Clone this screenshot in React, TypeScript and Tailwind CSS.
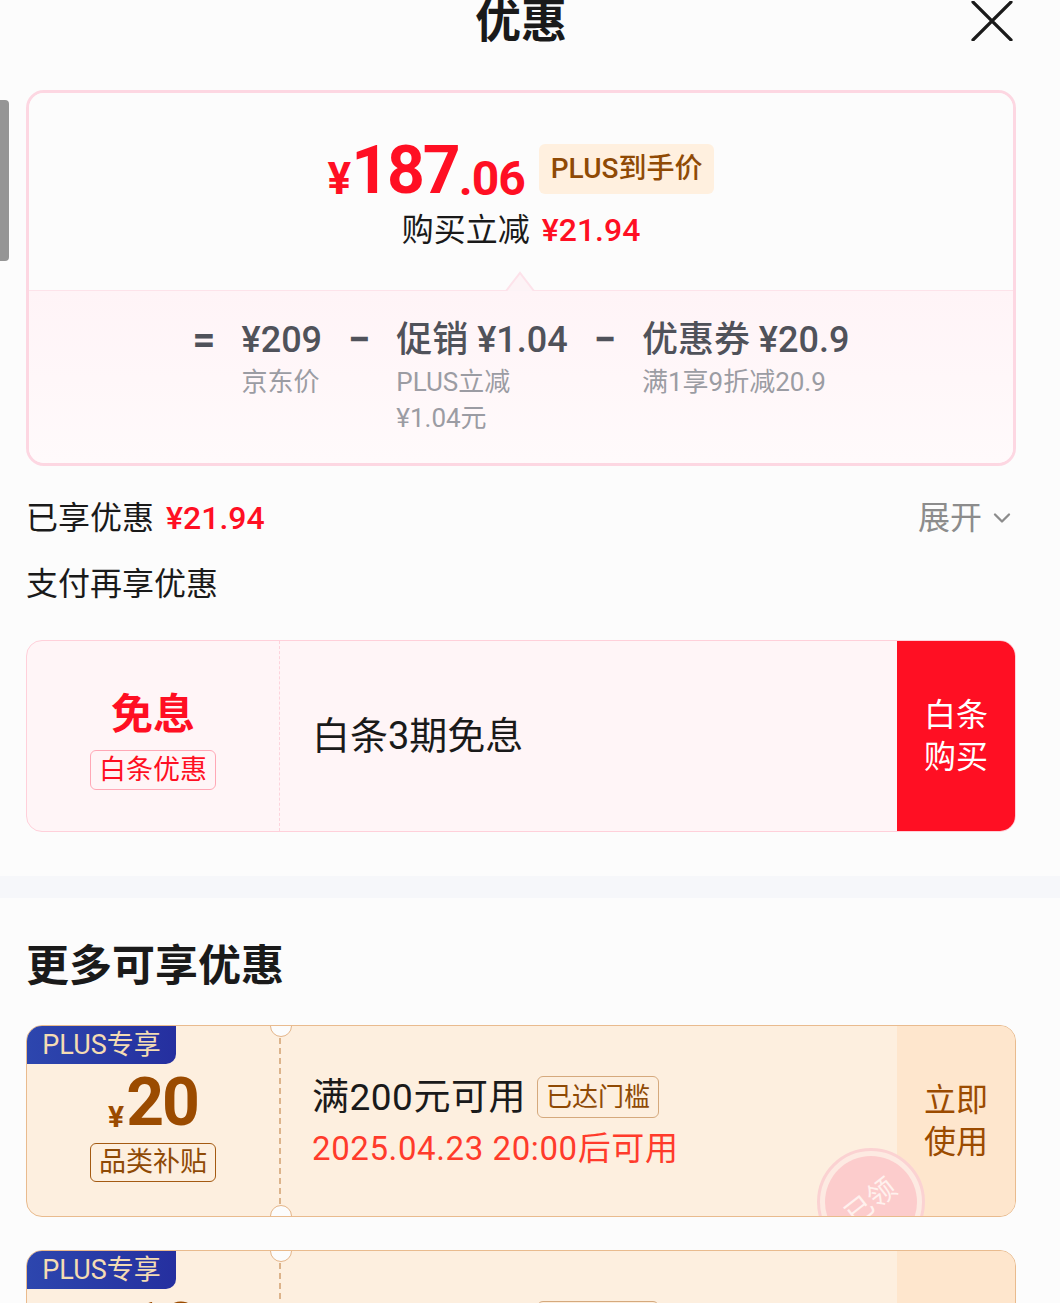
import { ChevronDown } from "lucide-react";

const font = { fontFamily: '"Roboto", "Noto Sans CJK SC", sans-serif' };

type Coupon = { amount: string; tag: string; rule: string; time: string };

const coupons: Coupon[] = [
  { amount: "20", tag: "品类补贴", rule: "满200元可用", time: "2025.04.23 20:00后可用" },
  { amount: "10", tag: "品类补贴", rule: "满100元可用", time: "2025.04.23 20:00后可用" },
];

const CouponCard = ({ c }: { c: Coupon }) => (
  <div className="relative flex h-[192px] rounded-[16px] border border-[#e9bb8e] bg-[#fdefdf] overflow-hidden">
    {/* plus badge */}
    <div className="absolute left-0 top-0 flex h-[38px] w-[149px] items-center justify-center rounded-br-[10px] bg-gradient-to-r from-[#2d46ae] to-[#252f9f] text-[27px] leading-none text-[#f4dcb3]">
      PLUS专享
    </div>
    {/* left amount */}
    <div className="flex w-[252px] shrink-0 flex-col items-center pt-[44px]">
      <div className="flex items-end font-bold leading-none text-[#9b4b00]">
        <span className="mb-[4px] mr-[2px] text-[30px]">¥</span>
        <span className="text-[66px] tracking-[-2px]">{c.amount}</span>
      </div>
      <div className="mt-[7px] rounded-[6px] border border-[#a45a12] px-[8px] py-[3px] text-[27px] leading-[31px] text-[#8f4a05]">
        {c.tag}
      </div>
    </div>
    {/* dashed separator with notches */}
    <div className="relative w-0 border-l-2 border-dashed border-[#dcb38a] my-[12px]">
      <div className="absolute -left-[11px] -top-[23px] h-[22px] w-[22px] rounded-full border border-[#e3b488] bg-[#fcfcfc]" />
      <div className="absolute -left-[11px] -bottom-[23px] h-[22px] w-[22px] rounded-full border border-[#e3b488] bg-[#fcfcfc]" />
    </div>
    {/* middle */}
    <div className="relative flex flex-1 flex-col pl-[31px] pt-[50px]">
      <div className="flex items-center">
        <span className="text-[37px] leading-none tracking-[0.5px] text-[#1a1a1a]">{c.rule}</span>
        <span className="ml-[11px] rounded-[6px] border border-[#d5a97d] px-[8px] py-[4px] text-[26px] leading-[32px] text-[#8f4a05]">
          已达门槛
        </span>
      </div>
      <div className="mt-[14px] text-[33px] leading-none tracking-[0.6px] text-[#ff3b2b]">{c.time}</div>
      {/* stamp */}
      <div className="absolute left-[536px] top-[122px] flex h-[108px] w-[108px] items-center justify-center rounded-full border-[3px] border-[#fbd2d2] bg-[#fdeae2]">
        <div className="flex h-[92px] w-[92px] items-center justify-center rounded-full bg-[#fccccc]">
          <span className="-rotate-[38deg] text-[28px] leading-none text-[#fff1ee]">已领</span>
        </div>
      </div>
    </div>
    {/* right */}
    <div className="flex w-[118px] shrink-0 items-center justify-center bg-[#fee6cd]">
      <div className="text-center text-[32px] leading-[42px] text-[#9b4b00]">
        立即
        <br />
        使用
      </div>
    </div>
  </div>
);

export default function App() {
  return (
    <div className="relative min-h-[1303px] w-[1060px] overflow-hidden bg-[#fcfcfc]" style={font}>
      {/* scrollbar */}
      <div className="absolute left-0 top-[100px] h-[161px] w-[9px] rounded-r-[4px] bg-[#959595]" />

      {/* header */}
      <div className="relative mr-[18px] flex h-[46px] items-center justify-center">
        <div className="-mt-[5px] text-[46px] font-bold leading-[46px] text-[#1a1a1a]">优惠</div>
        <svg className="absolute right-[29px] top-[1px]" width="42" height="40" viewBox="0 0 42 40">
          <path d="M2 1 L40 39 M40 1 L2 39" stroke="#1a1a1a" strokeWidth="3.2" strokeLinecap="round" />
        </svg>
      </div>

      <div className="pl-[26px] pr-[44px] pt-[44px]">
        {/* price card */}
        <div className="overflow-hidden rounded-[18px] border-[3px] border-[#fdd7e2]">
          <div className="relative flex h-[197px] flex-col items-center bg-[#fcfcfc] pt-[45px]">
            <div className="flex items-end">
              <div className="flex items-end font-bold leading-none text-[#ff0f23]">
                <span className="mb-[3px] text-[44px]">¥</span>
                <span className="text-[66px] tracking-[-2px]">187</span>
                <span className="mb-[1px] text-[48px] tracking-[-1px]">.06</span>
              </div>
              <div className="mb-[10px] ml-[14px] flex h-[50px] items-center rounded-[6px] bg-[#fff0df] px-[12px] text-[28px] font-medium leading-none text-[#8f4a05]">
                PLUS到手价
              </div>
            </div>
            <div className="mt-[10px] flex items-center text-[32px] leading-none">
              <span className="text-[#1a1a1a]">购买立减</span>
              <span className="ml-[12px] font-medium text-[#ff0f23]">¥21.94</span>
            </div>
            <svg className="absolute bottom-[-1px] left-[476px]" width="30" height="20" viewBox="0 0 30 20">
              <path d="M1 20 L15 2 L29 20" fill="#fdf3f6" stroke="#fde2ea" strokeWidth="2" />
            </svg>
          </div>
          <div className="h-[173px] border-t border-[#fde3ea] bg-gradient-to-b from-[#fff4f7] to-[#fffafb] pt-[27px]">
            <div className="flex justify-center gap-[26px] text-[#50525a]">
              <span className="text-[40px] font-bold leading-[44px]">=</span>
              <div className="flex flex-col">
                <span className="text-[36px] font-medium leading-[44px]">¥209</span>
                <span className="mt-[2px] text-[26px] leading-[36px] text-[#9b9ca3]">京东价</span>
              </div>
              <span className="text-[40px] font-bold leading-[44px]">−</span>
              <div className="flex flex-col">
                <span className="text-[36px] font-medium leading-[44px]">促销 ¥1.04</span>
                <span className="mt-[2px] text-[26px] leading-[36px] text-[#9b9ca3]">
                  PLUS立减
                  <br />
                  ¥1.04元
                </span>
              </div>
              <span className="text-[40px] font-bold leading-[44px]">−</span>
              <div className="flex flex-col">
                <span className="text-[36px] font-medium leading-[44px]">优惠券 ¥20.9</span>
                <span className="mt-[2px] text-[26px] leading-[36px] text-[#9b9ca3]">满1享9折减20.9</span>
              </div>
            </div>
          </div>
        </div>

        {/* enjoyed */}
        <div className="mt-[36px] flex items-center justify-between text-[32px] leading-none">
          <div className="flex items-center">
            <span className="text-[#1a1a1a]">已享优惠</span>
            <span className="ml-[12px] font-medium text-[#ff0f23]">¥21.94</span>
          </div>
          <div className="flex items-center text-[#8c8c8c]">
            <span>展开</span>
            <ChevronDown className="ml-[6px] h-[28px] w-[28px]" strokeWidth={2} />
          </div>
        </div>
        <div className="mt-[34px] text-[32px] leading-none text-[#1a1a1a]">支付再享优惠</div>

        {/* baitiao card */}
        <div className="mt-[40px] flex h-[192px] overflow-hidden rounded-[16px] border border-[#ffd0da] bg-[#fff5f7]">
          <div className="flex w-[252px] shrink-0 flex-col items-center justify-center pt-[12px]">
            <span className="text-[42px] font-bold leading-none text-[#ff0f23]">免息</span>
            <span className="mt-[14px] rounded-[6px] border border-[#ffa8b6] px-[8px] text-[27px] leading-[38px] text-[#ff0f23]">
              白条优惠
            </span>
          </div>
          <div className="w-0 border-l border-dashed border-[#fdd3dc]" />
          <div className="flex flex-1 items-center pl-[32px] text-[38px] leading-none text-[#1a1a1a]">白条3期免息</div>
          <div className="flex w-[118px] shrink-0 items-center justify-center bg-[#ff0f23]">
            <div className="text-center text-[32px] leading-[42px] text-white">
              白条
              <br />
              购买
            </div>
          </div>
        </div>
      </div>

      {/* band */}
      <div className="mt-[44px] h-[22px] bg-[#f6f7fa]" />

      <div className="pl-[26px] pr-[44px] pt-[47px]">
        <div className="text-[43px] font-bold leading-none text-[#1a1a1a]">更多可享优惠</div>
        <div className="mt-[37px] flex flex-col gap-[33px]">
          {coupons.map((c, i) => (
            <CouponCard key={i} c={c} />
          ))}
        </div>
      </div>
    </div>
  );
}
